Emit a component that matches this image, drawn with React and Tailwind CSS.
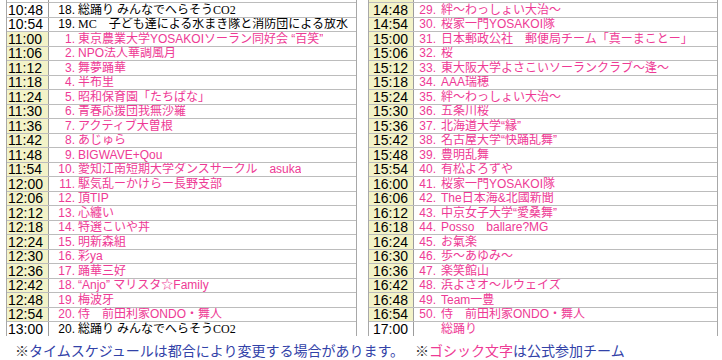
const left = [
  ["10:48", "18.", "総踊り みんなでへらそうCO2", "b"],
  ["10:54", "19.", "MC　子ども達による水まき隊と消防団による放水", "b"],
  ["11:00", "1.", "東京農業大学YOSAKOIソーラン同好会 “百笑”", "p"],
  ["11:06", "2.", "NPO法人華調風月", "p"],
  ["11:12", "3.", "舞夢踊華", "p"],
  ["11:18", "4.", "半布里", "p"],
  ["11:24", "5.", "昭和保育園「たちばな」", "p"],
  ["11:30", "6.", "青春応援団我無沙羅", "p"],
  ["11:36", "7.", "アクティブ大曽根", "p"],
  ["11:42", "8.", "あじゅら", "p"],
  ["11:48", "9.", "BIGWAVE+Qou", "p"],
  ["11:54", "10.", "愛知江南短期大学ダンスサークル　asuka", "p"],
  ["12:00", "11.", "駆気乱ーかけらー長野支部", "p"],
  ["12:06", "12.", "頂TIP", "p"],
  ["12:12", "13.", "心纏い", "p"],
  ["12:18", "14.", "特選こいや丼", "p"],
  ["12:24", "15.", "明新森組", "p"],
  ["12:30", "16.", "彩ya", "p"],
  ["12:36", "17.", "踊華三好", "p"],
  ["12:42", "18.", "“Anjo” マリスタ☆Family", "p"],
  ["12:48", "19.", "梅波牙", "p"],
  ["12:54", "20.", "侍　前田利家ONDO・舞人", "p"],
  ["13:00", "20.", "総踊り みんなでへらそうCO2", "b"],
];

const right = [
  ["14:48", "29.", "絆〜わっしょい大治〜", "p"],
  ["14:54", "30.", "桜家一門YOSAKOI隊", "p"],
  ["15:00", "31.", "日本郵政公社　郵便局チーム「真ーまことー」", "p"],
  ["15:06", "32.", "桜", "p"],
  ["15:12", "33.", "東大阪大学よさこいソーランクラブ〜逢〜", "p"],
  ["15:18", "34.", "AAA瑞穂", "p"],
  ["15:24", "35.", "絆〜わっしょい大治〜", "p"],
  ["15:30", "36.", "五条川桜", "p"],
  ["15:36", "37.", "北海道大学“縁”", "p"],
  ["15:42", "38.", "名古屋大学“快踊乱舞”", "p"],
  ["15:48", "39.", "豊明乱舞", "p"],
  ["15:54", "40.", "有松よろずや", "p"],
  ["16:00", "41.", "桜家一門YOSAKOI隊", "p"],
  ["16:06", "42.", "The日本海&北國新聞", "p"],
  ["16:12", "43.", "中京女子大学“愛桑舞”", "p"],
  ["16:18", "44.", "Posso　ballare?MG", "p"],
  ["16:24", "45.", "お氣楽", "p"],
  ["16:30", "46.", "歩〜あゆみ〜", "p"],
  ["16:36", "47.", "楽笑館山", "p"],
  ["16:42", "48.", "浜よさオ〜ルウェイズ", "p"],
  ["16:48", "49.", "Team一豊", "p"],
  ["16:54", "50.", "侍　前田利家ONDO・舞人", "p"],
  ["17:00", "", "総踊り", "p2"],
];

function Row({ row, side }) {
  const [time, num, name, kind] = row;
  const yellow = kind === "p";
  const pink = kind === "p" || kind === "p2";

  return (
    <div className="flex h-[14.5px] border-b border-[#bcbcbc]">
      <div
        className={`${side === "l" ? "w-[42px] pl-[1px]" : "w-[45px] pl-[4px]"} shrink-0 flex items-center border-r border-[#9c9c9c] text-[14px] leading-[14px] text-black ${yellow ? "bg-[#f3f3c8]" : "bg-white"}`}
        style={{ fontFamily: '"Liberation Sans", Arial, sans-serif' }}
      >
        {time}
      </div>
      <div
        className={`flex items-center overflow-hidden whitespace-nowrap text-[12px] leading-[14px] ${pink ? "text-[#ee3a95]" : "text-black"}`}
      >
        <span
          className={`${side === "l" ? "w-[26px]" : "w-[22px]"} shrink-0 text-right`}
          style={{ fontFamily: '"Liberation Sans", Arial, sans-serif' }}
        >
          {num}
        </span>
        <span
          className={side === "l" ? "ml-[3px]" : "ml-[5px]"}
          style={{
            fontFamily: pink
              ? '"Liberation Sans", "Noto Sans CJK JP", sans-serif'
              : '"Liberation Serif", "Noto Sans CJK JP", serif',
          }}
        >
          {name}
        </span>
      </div>
    </div>
  );
}

function Table({ rows, side, prevYellow }) {
  return (
    <div className={`${side === "l" ? "w-[351px]" : "w-[350px]"} border-x border-[#a8a8a8] bg-white`}>
      {/* row cut off by the top of the window */}
      <Row row={["", "", "", prevYellow ? "p" : "b"]} side={side} />
      {rows.map((r) => (
        <Row key={r[0]} row={r} side={side} />
      ))}
    </div>
  );
}

export default function App() {
  return (
    <div className="w-[722px] h-[360px] overflow-hidden bg-white">
      <div className="h-[336px] overflow-hidden">
        <div className="flex gap-[11px] pl-[6px] -mt-[11.5px]">
          <Table rows={left} side="l" prevYellow={false} />
          <Table rows={right} side="r" prevYellow={true} />
        </div>
      </div>

      {/* Notes */}
      <div
        className="mt-[6px] pl-[15px] flex whitespace-nowrap text-[14px] leading-[17px]"
        style={{ fontFamily: '"Noto Sans CJK JP", sans-serif' }}
      >
        <span>
          <span className="text-[#333333]">※</span>
          <span className="text-[#3242a8]">タイムスケジュールは都合により変更する場合があります。</span>
        </span>
        <span className="ml-[11px]">
          <span className="text-[#333333]">※</span>
          <span className="text-[#ee3a95]">ゴシック文字</span>
          <span className="text-[#3242a8]">は公式参加チーム</span>
        </span>
      </div>
    </div>
  );
}
